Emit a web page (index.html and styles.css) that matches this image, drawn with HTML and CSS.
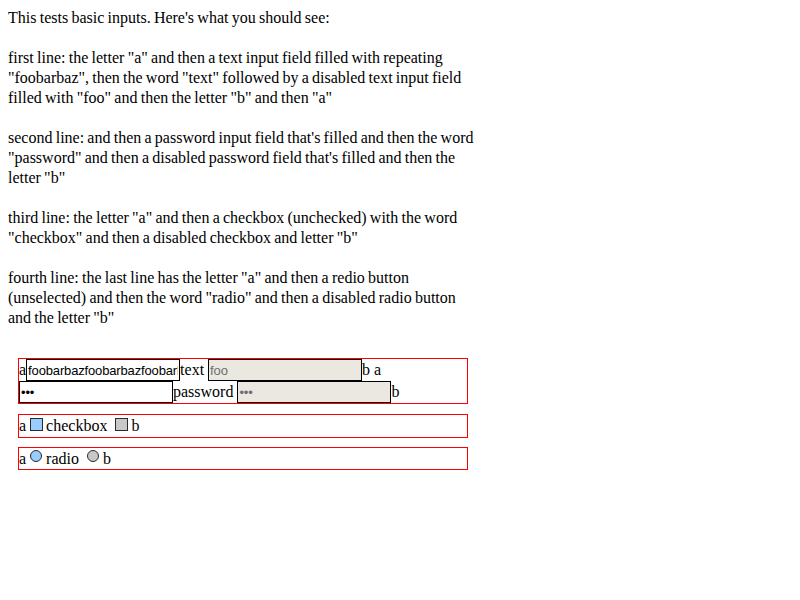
FILE: index.html
```html
<!DOCTYPE html>
<html>
<head>
<meta charset="utf-8">
<link rel="stylesheet" href="styles.css">
</head>
<body>
<div class="intro">This tests basic inputs. Here's what you should see:<br><br>first line: the letter "a" and then a text input field filled with repeating<br>"foobarbaz", then the word "text" followed by a disabled text input field<br>filled with "foo" and then the letter "b" and then "a"<br><br>second line: and then a password input field that's filled and then the word<br>"password" and then a disabled password field that's filled and then the<br>letter "b"<br><br>third line: the letter "a" and then a checkbox (unchecked) with the word<br>"checkbox" and then a disabled checkbox and letter "b"<br><br>fourth line: the last line has the letter "a" and then a redio button<br>(unselected) and then the word "radio" and then a disabled radio button<br>and the letter "b"<br><br></div>
<div class="test rows">a<input class="field" type="text" value="foobarbazfoobarbazfoobarbaz">text <input class="field" type="text" value="foo" disabled>b a <input class="field" type="password" value="foo">password <input class="field" type="password" value="foo" disabled>b</div>
<div class="test single">a<input class="check" type="checkbox">checkbox <input class="check" type="checkbox" disabled>b</div>
<div class="test single radios">a<input class="radio" type="radio">radio <input class="radio" type="radio" disabled>b</div>
</body>
</html>
```
FILE: styles.css
```css
html, body {
  background: #ffffff;
}
body {
  margin: 8px;
  font-family: "Liberation Serif", "Times New Roman", serif;
  font-size: 16px;
  line-height: 20px;
  color: #000000;
}
.intro {
  white-space: nowrap;
  word-spacing: -0.75px;
}
.test {
  width: 448px;
  margin: 10px;
  border: 1px solid #ff0000;
  line-height: 22px;
}
.radios {
  line-height: 21px;
  margin-top: -1px;
}
.field {
  box-sizing: border-box;
  width: 154px;
  height: 22px;
  margin: 0;
  padding: 1px;
  border: 1px solid #000000;
  background: #ffffff;
  color: #000000;
  font-family: "Liberation Sans", Arial, sans-serif;
  font-size: 13px;
  letter-spacing: -0.15px;
  vertical-align: top;
  outline: none;
}
.field:disabled {
  background: #eae8e1;
  color: #6d6d6d;
}
.check {
  -webkit-appearance: none;
  appearance: none;
  box-sizing: border-box;
  width: 13px;
  height: 13px;
  margin: 3px 3px 0 4px;
  border: 1px solid #2b2b2b;
  background: #99ccff;
  vertical-align: top;
}
.check:disabled {
  background: #c8c8c8;
}
.radio {
  -webkit-appearance: none;
  appearance: none;
  box-sizing: border-box;
  width: 12px;
  height: 12px;
  margin: 2px 4px 0 4px;
  border: 1px solid #2b2b2b;
  border-radius: 50%;
  background: #99ccff;
  vertical-align: top;
}
.radio:disabled {
  background: #c8c8c8;
}
```
